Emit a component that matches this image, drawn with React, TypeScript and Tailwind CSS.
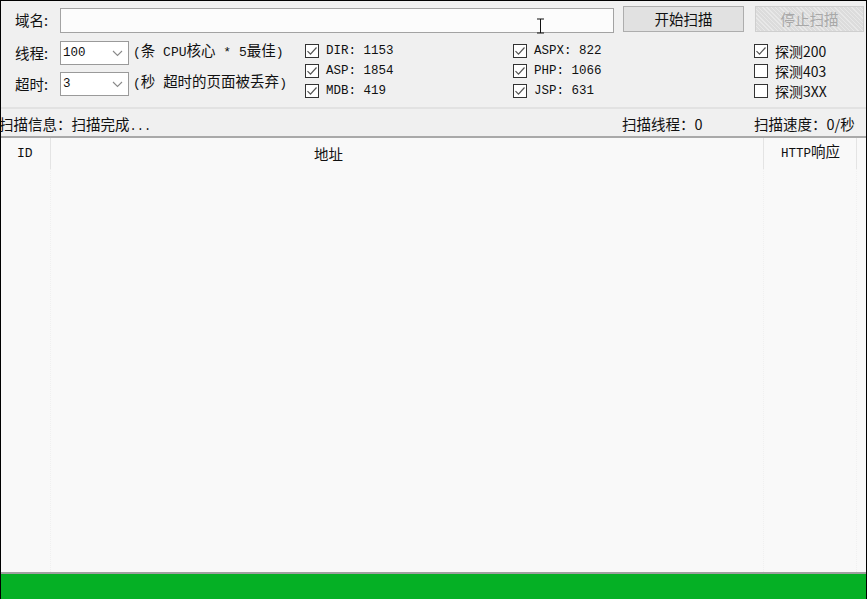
import React from "react";

const CJK = '"Noto Sans CJK SC", "Noto Sans", sans-serif';
const MONO = '"Liberation Mono", "Noto Sans CJK SC", monospace';

function Check({ checked, label, mono }: { checked: boolean; label: string; mono?: boolean }) {
  return (
    <div className="flex items-center h-[20px]">
      <div className="w-[14px] h-[14px] border border-[#333333] bg-white flex items-center justify-center shrink-0">
        {checked && (
          <svg width="12" height="12" viewBox="0 0 12 12">
            <path d="M1.5 6.2 L4.5 9.2 L10.5 2.5" fill="none" stroke="#555555" strokeWidth="1.2" />
          </svg>
        )}
      </div>
      <span
        className={mono ? "ml-[7px] text-[12.5px] text-[#111] whitespace-pre" : "ml-[7px] text-[14px] text-[#111] whitespace-pre"}
        style={{ fontFamily: mono ? MONO : CJK }}
      >
        {label}
      </span>
    </div>
  );
}

function Select({ value }: { value: string }) {
  return (
    <div className="w-[69px] h-[24px] border border-[#9a9a9a] bg-white flex items-center justify-between pl-[2px] pr-[5px]">
      <span className="text-[12.5px] text-[#111]" style={{ fontFamily: MONO }}>
        {value}
      </span>
      <svg width="11" height="7" viewBox="0 0 11 7">
        <path d="M1 1 L5.5 5.5 L10 1" fill="none" stroke="#8a8a8a" strokeWidth="1.1" />
      </svg>
    </div>
  );
}

export default function App() {
  return (
    <div
      className="relative w-[867px] h-[599px] overflow-hidden bg-[#f0f0f0] border-l border-t border-r border-black flex flex-col"
      style={{ fontFamily: CJK }}
    >
      {/* toolbar */}
      <div className="h-[106px] shrink-0 flex flex-col pl-[14px]">
        <div className="flex items-start mt-[5px] h-[27px]">
          <div className="w-[45px] h-[27px] flex items-center text-[14.5px] text-[#111]">域名:</div>
          <div className="w-[554px] h-[25px] mt-[2px] border border-[#a3a3a3] bg-[#fcfcfc]" />
          <button className="ml-[9px] w-[121px] h-[26px] border border-[#adadad] bg-[#e1e1e1] text-[14.5px] text-[#111] flex items-center justify-center">
            开始扫描
          </button>
          <button
            className="ml-[11px] w-[109px] h-[26px] border border-[#cfcfcf] text-[14.5px] text-[#a8a8a8] flex items-center justify-center"
            style={{
              backgroundColor: "#dcdcdc",
              backgroundImage:
                "repeating-linear-gradient(45deg, rgba(255,255,255,0.35) 0px, rgba(255,255,255,0.35) 1px, transparent 1px, transparent 3px)",
            }}
          >
            停止扫描
          </button>
        </div>
        <div className="flex mt-[8px]">
          <div className="w-[290px] flex flex-col gap-[7px]">
            <div className="flex items-center h-[24px]">
              <div className="w-[45px] text-[14.5px] text-[#111]">线程:</div>
              <Select value="100" />
              <span className="ml-[4px] text-[13px] text-[#111] whitespace-pre" style={{ fontFamily: MONO }}>
                (<span className="text-[14.5px]">条</span> CPU<span className="text-[14.5px]">核心</span> * 5<span className="text-[14.5px]">最佳</span>)
              </span>
            </div>
            <div className="flex items-center h-[24px]">
              <div className="w-[45px] text-[14.5px] text-[#111]">超时:</div>
              <Select value="3" />
              <span className="ml-[4px] text-[13px] text-[#111] whitespace-pre" style={{ fontFamily: MONO }}>
                (<span className="text-[14.5px]">秒</span> <span className="text-[14.5px]">超时的页面被丢弃</span>)
              </span>
            </div>
          </div>
          <div className="w-[208px] flex flex-col">
            <Check checked label="DIR: 1153" mono />
            <Check checked label="ASP: 1854" mono />
            <Check checked label="MDB: 419" mono />
          </div>
          <div className="w-[241px] flex flex-col">
            <Check checked label="ASPX: 822" mono />
            <Check checked label="PHP: 1066" mono />
            <Check checked label="JSP: 631" mono />
          </div>
          <div className="flex flex-col">
            <Check checked label="探测200" />
            <Check checked={false} label="探测403" />
            <Check checked={false} label="探测3XX" />
          </div>
        </div>
      </div>
      <div className="h-[2px] shrink-0 bg-[#e2e2e2]" />
      {/* status bar */}
      <div className="h-[27px] shrink-0 flex items-center pt-[3px] text-[14.5px] text-[#111]">
        <div className="w-[623px] -ml-[2px] whitespace-pre">
          扫描信息：扫描完成<span className="text-[12px]" style={{ fontFamily: MONO }}>...</span>
        </div>
        <div className="w-[132px]">扫描线程：0</div>
        <div>扫描速度：0/秒</div>
      </div>
      <div className="h-[2px] shrink-0 bg-[#a9a9a9]" />
      {/* list view */}
      <div className="flex-1 bg-[#f9f9f9] flex">
        <div className="w-[50px] h-full border-r border-dotted border-[#f0f0f0] flex flex-col">
          <div className="h-[31px] flex items-center pl-[16px] text-[13px] text-[#111] border-r border-[#e4e4e4] -mr-px" style={{ fontFamily: MONO }}>
            ID
          </div>
        </div>
        <div className="w-[713px] h-full border-r border-dotted border-[#f0f0f0] flex flex-col">
          <div className="h-[31px] flex items-center pl-[263px] text-[14.5px] text-[#111] border-r border-[#e4e4e4] -mr-px">地址</div>
        </div>
        <div className="w-[93px] h-full border-r border-dotted border-[#f0f0f0] flex flex-col">
          <div className="h-[31px] flex items-center pl-[17px] border-r border-[#e4e4e4] -mr-px">
            <span className="text-[12.5px] text-[#111] whitespace-pre" style={{ fontFamily: MONO }}>
              HTTP<span className="text-[14.5px]">响应</span>
            </span>
          </div>
        </div>
      </div>
      <div className="h-[2px] shrink-0 bg-[#a0a0a0]" />
      <div className="h-[25px] shrink-0 bg-[#05b025]" />
      {/* mouse I-beam cursor */}
      <svg className="absolute left-[535px] top-[17px]" width="9" height="16" viewBox="0 0 9 16">
        <path d="M1 1 H8 M4.5 1 V15 M1 15 H8" fill="none" stroke="#111" strokeWidth="1" />
      </svg>
    </div>
  );
}
